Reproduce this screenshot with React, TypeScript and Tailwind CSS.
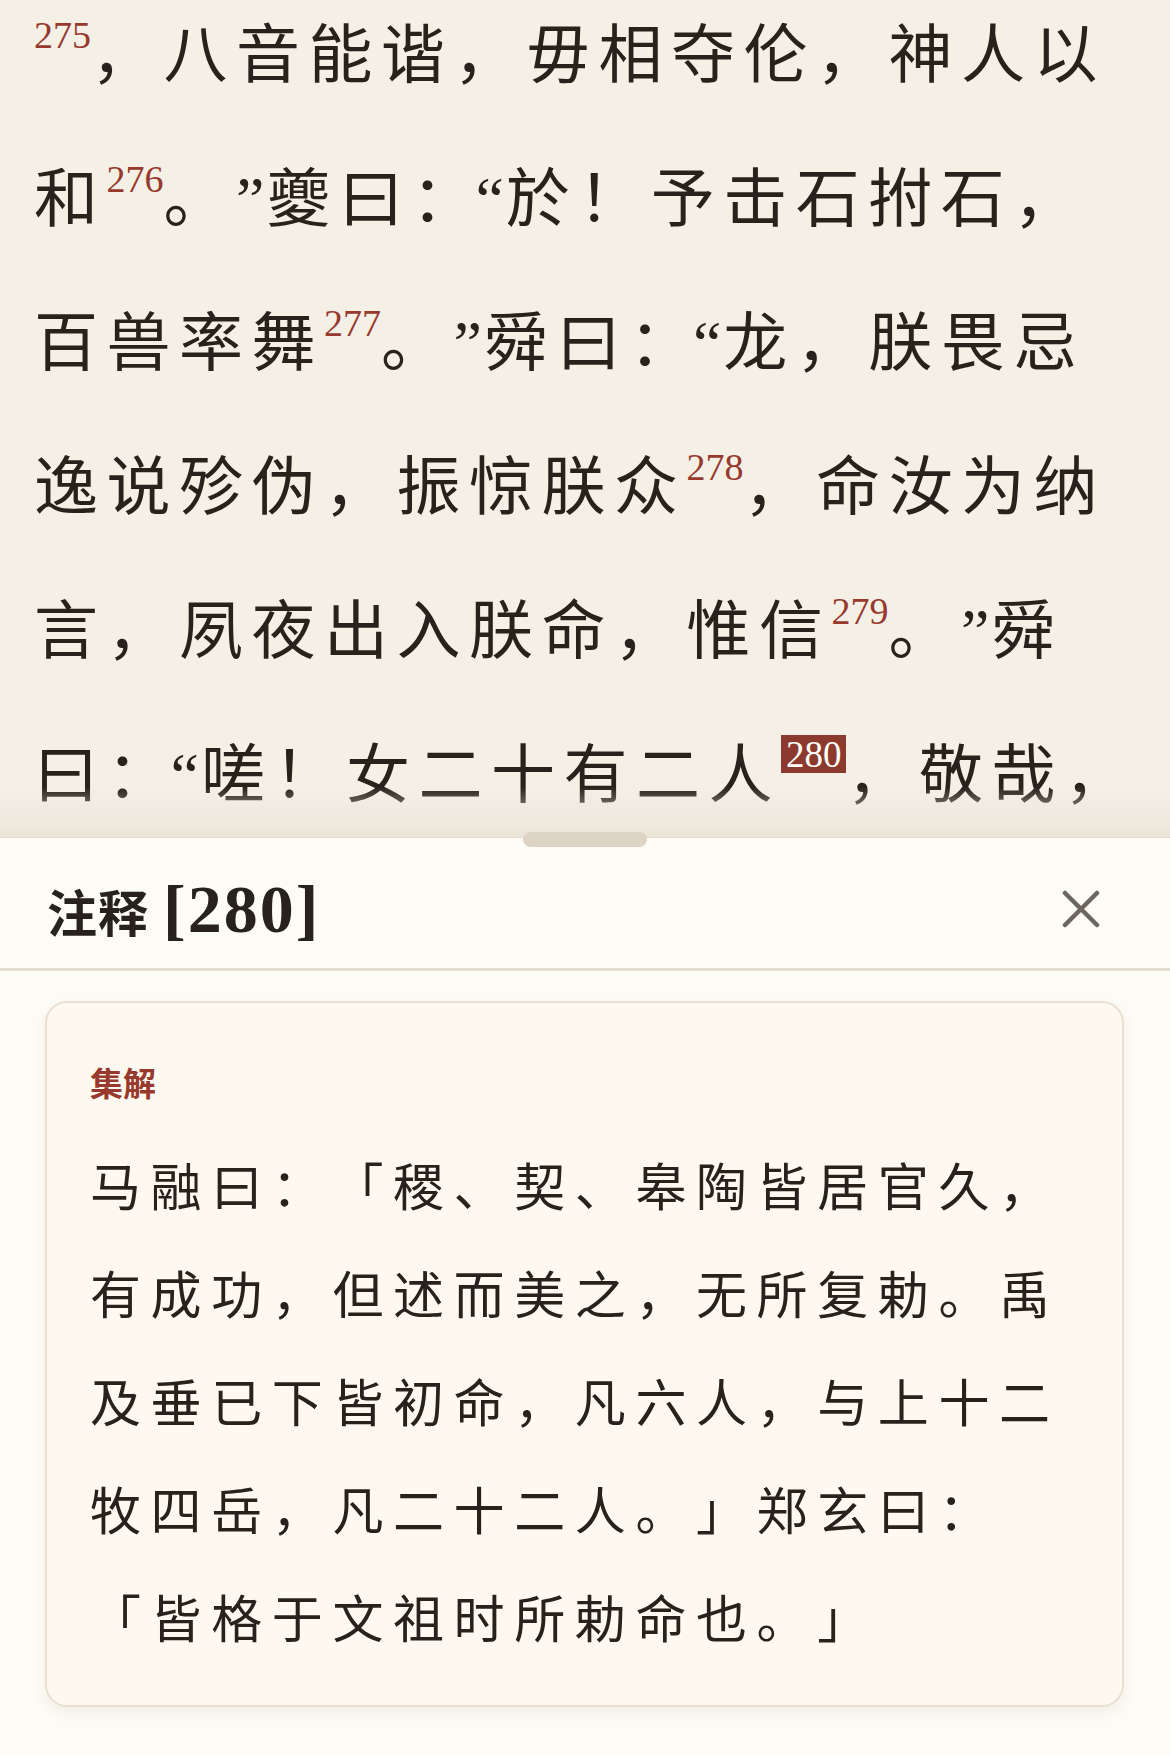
import React from 'react';

const serifCjk = '"Liberation Serif", "Noto Sans CJK SC", serif';

function Note({ n }: { n: string }) {
  return (
    <sup className="text-[38px] tracking-normal text-[#97392d] align-[0.27em] leading-none">{n}</sup>
  );
}

function ActiveNote({ n }: { n: string }) {
  return (
    <sup className="inline-block text-[37px] tracking-normal text-white bg-[#8c3a2d] px-[5px] h-[38px] leading-[40px] align-[0.3em]">
      {n}
    </sup>
  );
}

// colon followed by an opening quote sits tighter in the reference
function Colon() {
  return <span className="tracking-[0px]">：</span>;
}

function Q({ c }: { c: string }) {
  return <span className="tracking-[2px]">{c}</span>;
}

const lines: React.ReactNode[] = [
  <>
    <Note n="275" />，八音能谐，毋相夺伦，神人以
  </>,
  <>
    和<Note n="276" />。<Q c="”" />夔曰<Colon /><Q c="“" />於！予击石拊石，
  </>,
  <>
    百兽率舞<Note n="277" />。<Q c="”" />舜曰<Colon /><Q c="“" />龙，朕畏忌
  </>,
  <>
    逸说殄伪，振惊朕众<Note n="278" />，命汝为纳
  </>,
  <>
    言，夙夜出入朕命，惟信<Note n="279" />。<Q c="”" />舜
  </>,
  <>
    曰<Colon /><Q c="“" />嗟！女二十有二人<ActiveNote n="280" />，敬哉，
  </>,
];

const noteLines = [
  '马融曰：「稷、契、皋陶皆居官久，',
  '有成功，但述而美之，无所复勅。禹',
  '及垂已下皆初命，凡六人，与上十二',
  '牧四岳，凡二十二人。」郑玄曰：',
  '「皆格于文祖时所勅命也。」',
];

export default function App() {
  return (
    <div
      className="w-[1170px] h-[1755px] flex flex-col overflow-hidden bg-[#fdfbf5] [text-spacing-trim:space-all]"
      style={{ fontFamily: serifCjk }}
    >
      <div className="relative h-[837px] shrink-0 overflow-hidden bg-[#f4f0e6]">
        <div className="mt-[-16px] pl-[34px] text-[64px] leading-[144px] tracking-[8.5px] text-[#28221d]">
          {lines.map((l, i) => (
            <div key={i} className="whitespace-nowrap">
              {l}
            </div>
          ))}
        </div>
        <div className="absolute inset-x-0 bottom-0 h-[50px] bg-gradient-to-b from-transparent to-[#ebe5d9]" />
      </div>

      <div className="relative flex-1 flex flex-col bg-[#fdfbf5] border-t border-[#e4ddd0]">
        <div className="absolute left-[523px] top-[-6px] w-[124px] h-[15px] rounded-full bg-[#ddd4c5]" />

        <div className="h-[133px] pt-[12px] flex items-center justify-between pl-[47px] pr-[70px] border-b-[3px] border-[#e3dcd0]">
          <h2 className="font-bold text-[#28221d] flex items-baseline">
            <span className="text-[50px] tracking-[1px]">注释</span>
            <span className="text-[68px] ml-[14px] tracking-[2px]">[280]</span>
          </h2>
          <svg width="38" height="38" viewBox="0 0 38 38" className="text-[#6c665e]">
            <path d="M3 3 L35 35 M35 3 L3 35" stroke="currentColor" strokeWidth="4.5" strokeLinecap="round" />
          </svg>
        </div>

        <div className="mt-[30px] ml-[45px] mr-[46px] rounded-[22px] border-2 border-[#e8e0d3] bg-[#fdf9f0] pt-[62px] pb-[30px] pl-[43px] pr-[20px] shadow-[0_6px_14px_rgba(120,100,70,0.08)]">
          <div className="text-[33px] leading-[40px] font-bold text-[#97392d]">集解</div>
          <div className="mt-[30px] text-[51px] leading-[108px] tracking-[9.6px] text-[#28221d]">
            {noteLines.map((l, i) => (
              <div key={i} className="whitespace-nowrap">
                {l}
              </div>
            ))}
          </div>
        </div>
      </div>
    </div>
  );
}
